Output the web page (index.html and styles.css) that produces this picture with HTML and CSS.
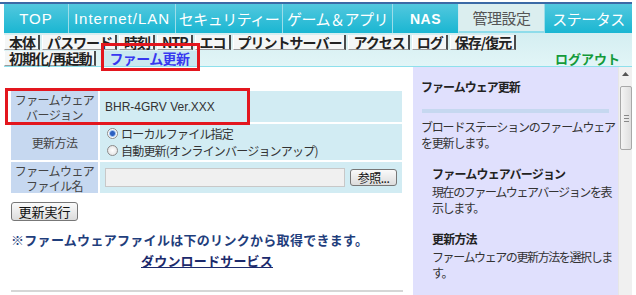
FILE: index.html
```html
<!DOCTYPE html>
<html lang="ja">
<head>
    <meta charset="UTF-8">
    <title>ファームウェア更新</title>
    <link rel="stylesheet" href="styles.css">
</head>
<body>
    <div class="topline"></div>
    <div class="page">
        <!-- main tabs -->
        <ul class="tabs">
            <li class="tab tab-top">TOP</li>
            <li class="tab tab-lan">Internet/LAN</li>
            <li class="tab tab-sec">セキュリティー</li>
            <li class="tab tab-game">ゲーム＆アプリ</li>
            <li class="tab tab-nas">NAS</li>
            <li class="tab tab-admin active">管理設定</li>
            <li class="tab tab-status">ステータス</li>
        </ul>

        <!-- sub menu -->
        <div class="submenu">
            <div class="subrow">
                <span class="sub">本体</span>
                <span class="sub">パスワード</span>
                <span class="sub">時刻</span>
                <span class="sub">NTP</span>
                <span class="sub">エコ</span>
                <span class="sub">プリントサーバー</span>
                <span class="sub">アクセス</span>
                <span class="sub">ログ</span>
                <span class="sub">保存/復元</span>
            </div>
            <div class="subrow">
                <span class="sub">初期化/再起動</span>
                <span class="sub current">ファーム更新</span>
                <span class="logout">ログアウト</span>
            </div>
        </div>

        <div class="main">
            <div class="content">
                <table class="form">
                    <tr class="row-ver">
                        <th>ファームウェア<br>バージョン</th>
                        <td class="ver">BHR-4GRV Ver.XXX</td>
                    </tr>
                    <tr class="row-method">
                        <th>更新方法</th>
                        <td>
                            <label class="radio"><span class="dot on"></span>ローカルファイル指定</label>
                            <label class="radio"><span class="dot"></span>自動更新(オンラインバージョンアップ)</label>
                        </td>
                    </tr>
                    <tr class="row-file">
                        <th>ファームウェア<br>ファイル名</th>
                        <td>
                            <div class="filebox">
                                <span class="fileinput"></span>
                                <span class="btn btn-browse">参照...</span>
                            </div>
                        </td>
                    </tr>
                </table>

                <span class="btn btn-run">更新実行</span>
                <p class="note">※ファームウェアファイルは下のリンクから取得できます。</p>
                <p class="dl"><a href="#">ダウンロードサービス</a></p>
                <div class="rule"></div>
            </div>

            <div class="help">
                <h3 class="help-title">ファームウェア更新</h3>
                <div class="help-bar"></div>
                <p class="help-text">ブロードステーションのファームウェア<br>を更新します。</p>
                <h4 class="help-head">ファームウェアバージョン</h4>
                <p class="help-sub">現在のファームウェアバージョンを表<br>示します。</p>
                <h4 class="help-head">更新方法</h4>
                <p class="help-sub">ファームウェアの更新方法を選択しま<br>す。</p>
            </div>

            <div class="scrollbar">
                <div class="arrow">
                    <svg width="7" height="4" viewBox="0 0 7 4"><path d="M0 4 L3.5 0 L7 4 Z" fill="#555"/></svg>
                </div>
                <div class="thumb">
                    <span class="grip"></span>
                </div>
            </div>
        </div>

        <!-- red annotation boxes -->
        <div class="mark mark-sub"></div>
        <div class="mark mark-row"></div>
    </div>
</body>
</html>
```

FILE: styles.css
```css
body {
    margin: 0;
    background: #ffffff;
    font-family: "Noto Sans CJK JP", "Liberation Sans", sans-serif;
    color: #333;
    overflow: hidden;
}

.topline {
    height: 2px;
    width: 632px;
    margin-top: 2px;
    background: #3b6aa6;
}

.page {
    position: relative;
    width: 628px;
    margin-left: 4px;
}

/* main tabs */
.tabs {
    display: flex;
    margin: 0;
    padding: 0;
    list-style: none;
    height: 29px;
    background: linear-gradient(#52c8de, #1ab6d2);
}

.tab {
    display: flex;
    align-items: center;
    justify-content: center;
    height: 29px;
    color: #fff;
    font-size: 15px;
    letter-spacing: -0.5px;
    border-left: 1px solid #9cdde9;
    box-sizing: border-box;
}

.tab-top { width: 64px; border-left: none; font-family: "Liberation Sans", sans-serif; letter-spacing: 1px; }
.tab-lan { width: 107px; font-family: "Liberation Sans", sans-serif; letter-spacing: 1px; }
.tab-sec { width: 107px; }
.tab-game { width: 110px; }
.tab-nas { width: 66px; font-family: "Liberation Sans", sans-serif; font-weight: bold; font-size: 14px; letter-spacing: 0.5px; }
.tab-admin { width: 86px; }
.tab-status { width: 88px; }

.tab.active {
    background: #dbeeef;
    color: #555;
    border-bottom: 2px solid #8fdcea;
    border-left: 1px solid #cfeaf0;
}

/* sub menu */
.submenu {
    height: 34px;
    padding-top: 2px;
    box-sizing: border-box;
    background: linear-gradient(#d4eef1, #e2f5f7);
    border-bottom: 1px solid #8ee0ec;
}

.subrow {
    display: flex;
    align-items: flex-start;
    height: 16px;
}

.sub {
    height: 15px;
    line-height: 15px;
    margin-right: 2px;
    padding: 0 3px 0 4px;
    font-size: 14px;
    font-weight: bold;
    color: #222;
    letter-spacing: -1px;
    background: #f4f6f6;
    border-left: 1px solid #fff;
    border-right: 2px solid #4a4a4a;
    border-bottom: 1px solid #9a9a9a;
    white-space: nowrap;
    box-sizing: border-box;
}

.sub.current {
    margin-left: 5px;
    color: #3838f0;
    background: #c9e8f0;
    border-right: none;
    border-left: 1px solid #777;
    border-bottom: none;
    padding: 0 8px 0 5px;
    letter-spacing: -0.6px;
}

.logout {
    margin-left: auto;
    margin-right: 12px;
    margin-top: 0;
    font-size: 13px;
    font-weight: bold;
    color: #139a3a;
    line-height: 15px;
}

/* main area */
.main {
    display: flex;
    height: 228px;
}

.content {
    width: 409px;
    padding: 24px 0 0 7px;
    box-sizing: border-box;
}

.form {
    width: 391px;
    border-collapse: collapse;
    font-size: 12px;
}

.form th {
    width: 87px;
    padding: 0;
    background: #c6d8f0;
    font-weight: normal;
    color: #444;
    line-height: 15px;
    letter-spacing: -0.6px;
    border-right: 2px solid #fff;
    border-bottom: 2px solid #fff;
}

.form td {
    padding: 0 0 0 5px;
    background: #d2ecf3;
    border-bottom: 2px solid #fff;
}

.row-ver th, .row-ver td { height: 31px; }
.row-method th, .row-method td { height: 36px; }
.row-file th, .row-file td { height: 31px; border-bottom: none; }

.ver {
    font-family: "Liberation Sans", sans-serif;
    font-size: 12px;
    color: #333;
}

.radio {
    display: flex;
    align-items: center;
    height: 17px;
    font-size: 12px;
    letter-spacing: -0.8px;
    color: #333;
    padding-left: 2px;
}

.dot {
    width: 9px;
    height: 9px;
    margin-right: 3px;
    border: 1px solid #8a8a8a;
    border-radius: 50%;
    background: radial-gradient(#fff, #ddd);
}

.dot.on {
    background: radial-gradient(#2c5fc0 0 2px, #9cc0ee 3px, #fff 4px);
}

.filebox {
    display: flex;
    align-items: center;
}

.fileinput {
    width: 238px;
    height: 17px;
    background: #f0f0f0;
    border: 1px solid #c8c8c8;
}

.btn {
    display: inline-flex;
    align-items: center;
    justify-content: center;
    box-sizing: border-box;
    font-size: 12px;
    color: #111;
    background: linear-gradient(#fafafa, #dcdcdc);
    border: 1px solid #777;
    border-radius: 3px;
}

.btn-browse {
    width: 47px;
    height: 17px;
    margin-left: 5px;
    letter-spacing: -0.5px;
}

.btn-run {
    width: 67px;
    height: 19px;
    margin-top: 9px;
    font-size: 13px;
}

.note {
    margin: 9px 0 0;
    font-size: 13px;
    font-weight: bold;
    color: #1f3e7c;
    letter-spacing: 0.3px;
    line-height: 18px;
}

.dl {
    margin: 3px 0 0;
    padding-left: 130px;
    font-size: 13px;
    font-weight: bold;
    line-height: 18px;
    letter-spacing: 0.2px;
}

.dl a {
    color: #1c2a6c;
}

.rule {
    margin-top: 20px;
    width: 392px;
    height: 2px;
    background: #d6d6d6;
}

/* help panel */
.help {
    width: 205px;
    padding: 12px 9px 0 8px;
    box-sizing: border-box;
    background: #e0e0fd;
    font-size: 12px;
    color: #333;
}

.help-title {
    margin: 0;
    font-size: 12px;
    font-weight: bold;
    color: #222;
    letter-spacing: -1px;
    line-height: 16px;
}

.help-bar {
    height: 4px;
    margin: 14px 0 6px 1px;
    background: #c6d8f0;
}

.help-text {
    margin: 0;
    line-height: 16px;
    letter-spacing: -1.2px;
    white-space: nowrap;
}

.help-head {
    margin: 14px 0 2px 11px;
    font-size: 12px;
    font-weight: bold;
    color: #222;
    letter-spacing: -0.8px;
    line-height: 17px;
}

.help-sub {
    margin: 0 0 0 11px;
    line-height: 16px;
    letter-spacing: -1.4px;
    white-space: nowrap;
}

/* scrollbar */
.scrollbar {
    width: 14px;
    background: #f0f0f0;
    border-left: 1px solid #e6e6e6;
    box-sizing: border-box;
}

.arrow {
    display: flex;
    justify-content: center;
    padding-top: 5px;
    height: 12px;
}

.thumb {
    display: flex;
    align-items: center;
    justify-content: center;
    height: 64px;
    margin: 2px 0 0 1px;
    width: 12px;
    box-sizing: border-box;
    border: 1px solid #a8a8a8;
    border-radius: 2px;
    background: linear-gradient(90deg, #f4f4f4, #dedede);
}

.grip {
    width: 5px;
    height: 5px;
    border-top: 1px solid #888;
    border-bottom: 1px solid #888;
    background: linear-gradient(#888, #888) center / 5px 1px no-repeat;
}

/* red annotation boxes */
.mark {
    position: absolute;
    border: 3px solid #e3161e;
    box-sizing: border-box;
}

.mark-sub {
    left: 97px;
    top: 39px;
    width: 99px;
    height: 28px;
}

.mark-row {
    left: 1px;
    top: 84px;
    width: 245px;
    height: 37px;
}
```
